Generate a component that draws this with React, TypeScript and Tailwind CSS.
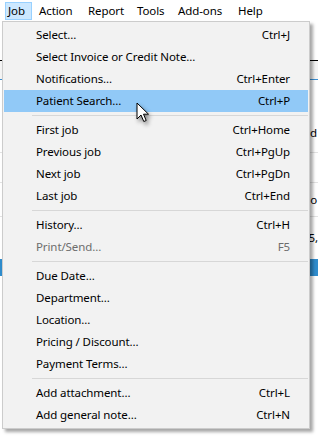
import React from "react";

type Item = { label: string; shortcut?: string; disabled?: boolean; active?: boolean };

const groups: Item[][] = [
  [
    { label: "Select...", shortcut: "Ctrl+J" },
    { label: "Select Invoice or Credit Note..." },
    { label: "Notifications...", shortcut: "Ctrl+Enter" },
    { label: "Patient Search...", shortcut: "Ctrl+P", active: true },
  ],
  [
    { label: "First job", shortcut: "Ctrl+Home" },
    { label: "Previous job", shortcut: "Ctrl+PgUp" },
    { label: "Next job", shortcut: "Ctrl+PgDn" },
    { label: "Last job", shortcut: "Ctrl+End" },
  ],
  [
    { label: "History...", shortcut: "Ctrl+H" },
    { label: "Print/Send...", shortcut: "F5", disabled: true },
  ],
  [
    { label: "Due Date..." },
    { label: "Department..." },
    { label: "Location..." },
    { label: "Pricing / Discount..." },
    { label: "Payment Terms..." },
  ],
  [
    { label: "Add attachment...", shortcut: "Ctrl+L" },
    { label: "Add general note...", shortcut: "Ctrl+N" },
  ],
];

const topMenus = [
  { label: "Job", w: "w-[27px]", open: true },
  { label: "Action", w: "w-[49px]" },
  { label: "Report", w: "w-[49px]" },
  { label: "Tools", w: "w-[41px]" },
  { label: "Add-ons", w: "w-[60px]" },
  { label: "Help", w: "w-[40px]" },
];

function MenuRow({ item }: { item: Item }) {
  return (
    <div
      className={
        "flex h-[22px] items-center justify-between pl-[32px] pr-[18px] " +
        (item.active ? "bg-[#91c9f7] " : "") +
        (item.disabled ? "text-[#6d6d6d]" : "text-black")
      }
    >
      <span>{item.label}</span>
      {item.shortcut && <span>{item.shortcut}</span>}
    </div>
  );
}

function Cursor() {
  return (
    <svg
      className="absolute left-[136px] top-[102px] drop-shadow-[2px_3px_2px_rgba(0,0,0,0.45)]"
      width="14"
      height="21"
      viewBox="0 0 14 21"
    >
      <path
        d="M1 1 V17 L5 13 L7.8 19.5 L10.2 18.5 L7.5 12.2 H12.5 Z"
        fill="#fff"
        stroke="#000"
        strokeWidth="1"
        strokeLinejoin="miter"
      />
    </svg>
  );
}

export default function App() {
  return (
    <div
      className="relative h-[436px] w-[318px] overflow-hidden bg-white text-[11.5px] leading-none tracking-[-0.1px]"
      style={{ fontFamily: '"Segoe UI", "Noto Sans", sans-serif' }}
    >
      {/* menu bar */}
      <div className="flex h-[20px] items-end bg-white pl-[5px]">
        {topMenus.map((m) => (
          <div
            key={m.label}
            className={
              "flex h-[18px] items-center " +
              m.w +
              (m.open ? " border border-[#99d1ff] bg-[#cce8ff] pl-[2px]" : " pl-[7px]")
            }
          >
            {m.label}
          </div>
        ))}
      </div>

      {/* window content behind the menu */}
      <div className="flex flex-col">
        <div className="h-[40px] bg-white" />
        <div className="h-px bg-black" />
        <div className="h-[18px] bg-[#f4f4f4]" />
        <div className="h-px bg-[#3a8fd3]" />
        <div className="flex h-[73px] items-end justify-end border-b border-[#e3e3e3] pb-[14px] pr-[1px]">
          d
        </div>
        <div className="h-[30px] border-b border-[#e3e3e3]" />
        <div className="flex h-[34px] items-center justify-end border-b border-[#e3e3e3] pr-[1px]">
          o
        </div>
        <div className="flex h-[42px] items-center justify-end pr-0">5,</div>
        <div className="h-[17px] bg-[#2f8ccc]" />
        <div className="flex-1 bg-white" />
      </div>

      {/* dropdown */}
      <div className="absolute left-[2px] top-[21px] w-[308px] border border-[#cccccc] bg-[#f2f2f2] px-px pb-[2px] pt-[2px] shadow-[3px_3px_3px_rgba(0,0,0,0.35)]">
        {groups.map((g, gi) => (
          <div key={gi}>
            {gi > 0 && (
              <div className="flex h-[7px] items-center pl-[28px]">
                <div className="h-px w-full bg-[#d7d7d7]" />
              </div>
            )}
            {g.map((it) => (
              <MenuRow key={it.label} item={it} />
            ))}
          </div>
        ))}
      </div>

      <Cursor />
    </div>
  );
}
